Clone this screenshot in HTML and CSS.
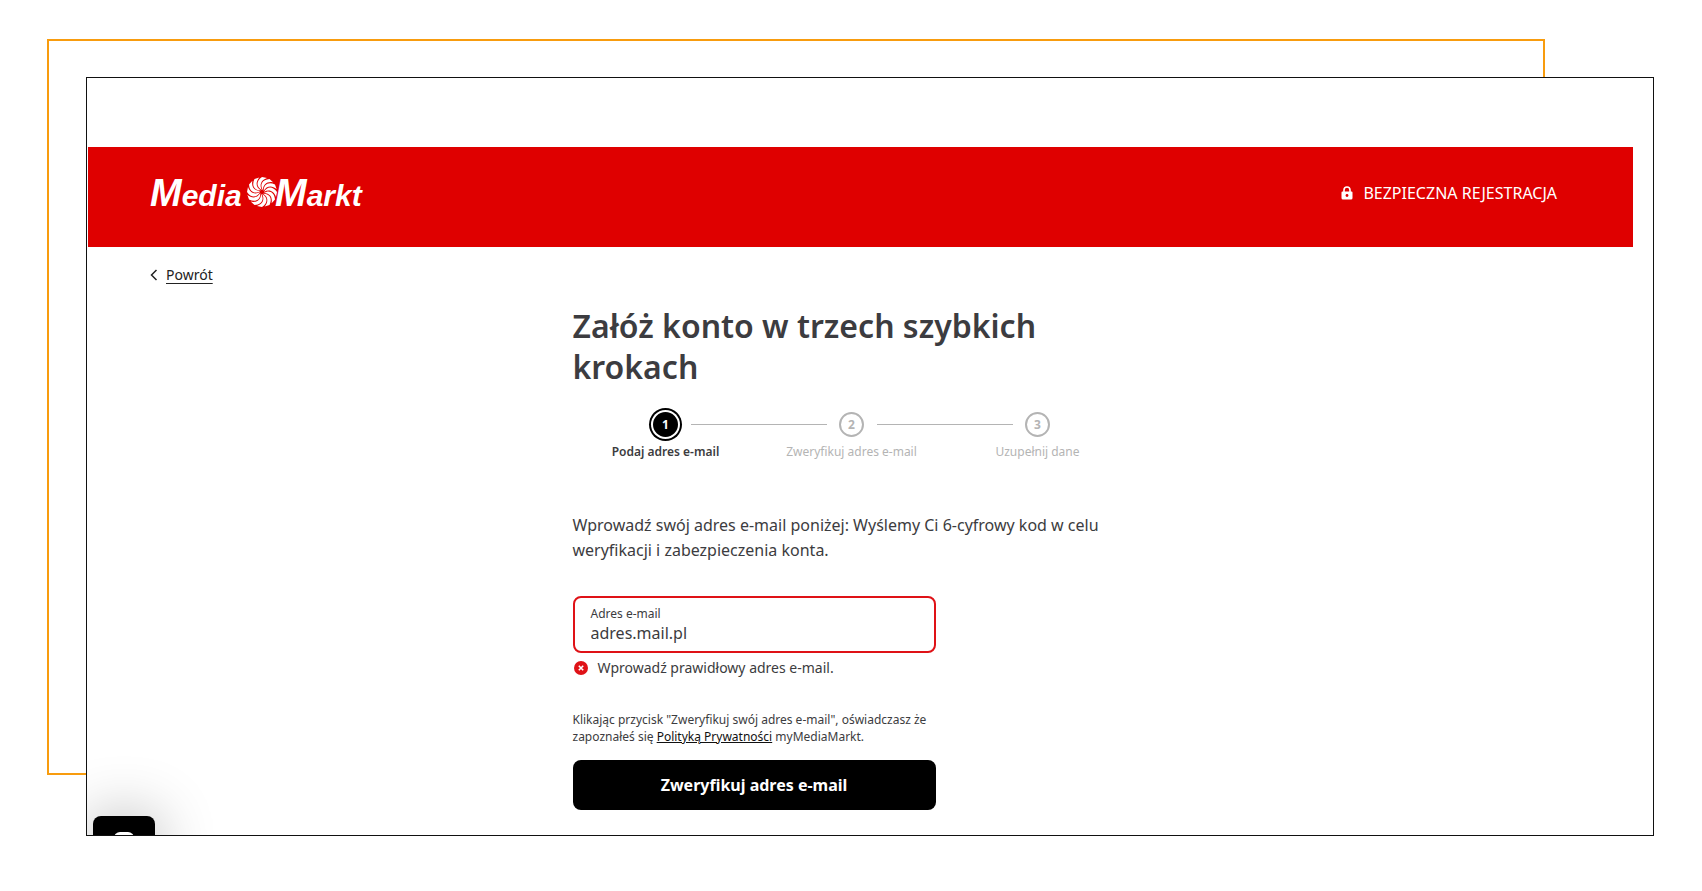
FILE: index.html
```
<!DOCTYPE html>
<html lang="pl">
<head>
  <meta charset="UTF-8" />
  <meta name="viewport" content="width=device-width, initial-scale=1" />
  <title>MediaMarkt - rejestracja</title>
  <link rel="stylesheet" href="styles.css">
</head>

<body>
  <div class="frame">
    <div class="window">
      <header class="header">
        <a class="logo" href="#" aria-label="MediaMarkt">
          <svg width="220" height="44" viewBox="0 0 220 44">
            <g class="logo-text">
              <text x="4" y="35"><tspan class="logo-cap">M</tspan>edia</text>
              <text x="129" y="35"><tspan class="logo-cap">M</tspan>arkt</text>
            </g>
            <defs>
              <path id="blade" d="M0 -2 C-6 -5 -6 -11 0 -15 L5 -14 C-1 -12 -3 -7 0 -2 Z" />
            </defs>
            <g transform="translate(116 21)" fill="#fff">
              <use href="#blade" />
              <use href="#blade" transform="rotate(30)" />
              <use href="#blade" transform="rotate(60)" />
              <use href="#blade" transform="rotate(90)" />
              <use href="#blade" transform="rotate(120)" />
              <use href="#blade" transform="rotate(150)" />
              <use href="#blade" transform="rotate(180)" />
              <use href="#blade" transform="rotate(210)" />
              <use href="#blade" transform="rotate(240)" />
              <use href="#blade" transform="rotate(270)" />
              <use href="#blade" transform="rotate(300)" />
              <use href="#blade" transform="rotate(330)" />
            </g>
          </svg>
        </a>
        <div class="secure">
          <svg width="12" height="14" viewBox="0 0 12 14">
            <path d="M3 6 V4 a3 3 0 0 1 6 0 V6" fill="none" stroke="#fff" stroke-width="1.6" />
            <path d="M1.5 5.5 H10.5 a1 1 0 0 1 1 1 V12 a1.5 1.5 0 0 1 -1.5 1.5 H2 A1.5 1.5 0 0 1 .5 12 V6.5 a1 1 0 0 1 1 -1 Z" fill="#fff" />
            <circle cx="6" cy="9.5" r="1.4" fill="#df0000" />
          </svg>
          <span>BEZPIECZNA REJESTRACJA</span>
        </div>
      </header>

      <div class="page">
        <nav class="back">
          <svg width="8" height="12" viewBox="0 0 8 12">
            <path d="M6.5 1 L1.5 6 L6.5 11" fill="none" stroke="#222" stroke-width="1.5" />
          </svg>
          <a href="#">Powrót</a>
        </nav>

        <main class="content">
          <h1>Załóż konto w trzech szybkich krokach</h1>

          <ol class="steps">
            <li class="step active">
              <span class="circle">1</span>
              <span class="step-label">Podaj adres e-mail</span>
            </li>
            <li class="step">
              <span class="circle">2</span>
              <span class="step-label">Zweryfikuj adres e-mail</span>
            </li>
            <li class="step">
              <span class="circle">3</span>
              <span class="step-label">Uzupełnij dane</span>
            </li>
          </ol>

          <p class="intro">Wprowadź swój adres e-mail poniżej: Wyślemy Ci 6-cyfrowy kod w celu weryfikacji i zabezpieczenia konta.</p>

          <form class="form">
            <div class="field">
              <label for="email">Adres e-mail</label>
              <input id="email" type="text" value="adres.mail.pl" aria-describedby="emailError" />
            </div>
            <div class="error" id="emailError">
              <svg width="14" height="14" viewBox="0 0 14 14">
                <circle cx="7" cy="7" r="7" fill="#df1217" />
                <path d="M4.8 4.8 L9.2 9.2 M9.2 4.8 L4.8 9.2" stroke="#fff" stroke-width="1.6" />
              </svg>
              <span>Wprowadź prawidłowy adres e-mail.</span>
            </div>
            <p class="legal">Klikając przycisk "Zweryfikuj swój adres e-mail", oświadczasz że zapoznałeś się <a href="#">Polityką Prywatności</a> myMediaMarkt.</p>
            <button type="button" class="submit">Zweryfikuj adres e-mail</button>
          </form>
        </main>
      </div>

      <button type="button" class="chat" aria-label="Czat">
        <svg width="24" height="24" viewBox="0 0 24 24">
          <rect x="2" y="0" width="20" height="20" rx="6" fill="#fff" />
        </svg>
      </button>
    </div>
  </div>
</body>
</html>
```

FILE: styles.css
```
* {
  box-sizing: border-box;
}

body {
  margin: 0;
  background: #fff;
  font-family: "Noto Sans", sans-serif;
  color: #3c3c40;
}

.frame {
  position: relative;
  padding: 77px 48px 55px 86px;
}

/* orange outline behind the window */
.frame::before {
  content: "";
  position: absolute;
  top: 39px;
  right: 157px;
  bottom: 116px;
  left: 47px;
  border: 2px solid #f89c0e;
}

.window {
  position: relative;
  overflow: hidden;
  padding: 69px 0 25px 1px;
  background: #fff;
  border: 1px solid #111;
}

.header {
  display: flex;
  align-items: center;
  justify-content: space-between;
  height: 100px;
  margin-right: 20px;
  padding: 0 76px 8px 58px;
  background: #df0000;
  color: #fff;
}

.logo svg {
  display: block;
}

.logo-text {
  font-family: "Liberation Sans", sans-serif;
  font-size: 30px;
  font-weight: bold;
  font-style: italic;
  fill: #fff;
}

.logo-cap {
  font-size: 38px;
}

.secure {
  display: flex;
  align-items: center;
  gap: 10px;
  font-size: 16px;
  line-height: 24px;
}

.page {
  padding-right: 38px;
}

.back {
  display: flex;
  align-items: center;
  gap: 8px;
  padding: 18px 0 0 62px;
  font-size: 14px;
  line-height: 20px;
}

.back a {
  color: #222;
  text-underline-offset: 3px;
}

.content {
  max-width: 558px;
  margin: 0 auto;
  padding-top: 20px;
}

h1 {
  margin: 0 0 21px;
  font-size: 32px;
  line-height: 41px;
  font-weight: 600;
}

.steps {
  display: flex;
  margin: 0 0 52px;
  padding: 0;
  list-style: none;
}

.step {
  position: relative;
  flex: 1;
  display: flex;
  flex-direction: column;
  align-items: center;
  color: #b4b4b4;
  font-size: 12px;
  line-height: 18px;
}

/* connector to the previous step */
.step + .step::before {
  content: "";
  position: absolute;
  top: 16px;
  right: calc(50% + 25px);
  width: calc(100% - 50px);
  height: 1px;
  background: #b4b4b4;
}

.circle {
  display: flex;
  align-items: center;
  justify-content: center;
  width: 25px;
  height: 25px;
  margin: 4px 0 6px;
  border: 2px solid #b4b4b4;
  border-radius: 50%;
  font-weight: 700;
}

.active {
  color: #3c3c40;
  font-weight: 600;
}

.active .circle {
  background: #000;
  border-color: #000;
  color: #fff;
  box-shadow: 0 0 0 2px #fff, 0 0 0 4px #000;
}

.intro {
  margin: 0 0 33px;
  font-size: 16px;
  line-height: 25px;
}

.form {
  max-width: 363px;
}

.field {
  display: flex;
  flex-direction: column;
  padding: 8px 16px;
  border: 2px solid #df1217;
  border-radius: 8px;
}

.field label {
  font-size: 12px;
  line-height: 16px;
}

.field input {
  width: 100%;
  height: 21px;
  padding: 0;
  border: none;
  outline: none;
  background: none;
  color: #3c3c40;
  font-family: inherit;
  font-size: 16px;
}

.error {
  display: flex;
  align-items: center;
  gap: 10px;
  padding: 5px 1px 0;
  font-size: 14px;
  line-height: 20px;
}

.legal {
  margin: 33px 0 15px;
  font-size: 12px;
  line-height: 17px;
}

.legal a {
  color: #111;
}

.submit {
  display: block;
  width: 100%;
  height: 50px;
  border: none;
  border-radius: 8px;
  background: #000;
  color: #fff;
  font-family: inherit;
  font-size: 16px;
  font-weight: 700;
}

/* chat launcher peeking in from the bottom edge */
.chat {
  position: absolute;
  left: 6px;
  bottom: -43px;
  display: flex;
  justify-content: center;
  width: 62px;
  height: 62px;
  padding: 16px 0 0;
  border: none;
  border-radius: 8px;
  background: #000;
  box-shadow: 0 0 60px rgba(0, 0, 0, 0.3);
}
```
